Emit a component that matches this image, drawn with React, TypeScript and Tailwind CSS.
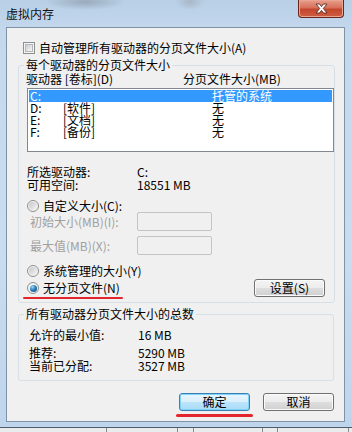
import React from 'react';

// 虚拟内存 dialog (Win7 look)

function CheckBox() {
    return (
        <span className="flex h-[12px] w-[12px] shrink-0 items-center justify-center border border-[#8e8f8f] bg-[#f4f4f4]">
            <span className="h-[8px] w-[8px] border border-[#b4b8bd] bg-gradient-to-br from-[#c9ccd1] to-[#f7f7f7]" />
        </span>
    );
}

function Radio({ checked }: { checked?: boolean }) {
    return (
        <span className="flex h-[12px] w-[12px] shrink-0 items-center justify-center rounded-full border border-[#8e8f8f] bg-[#f3f3f3]">
            {checked ? (
                <span className="h-[7px] w-[7px] rounded-full bg-[radial-gradient(circle_at_35%_30%,#a6d8f7_0%,#2a7fc0_45%,#0c3f6e_100%)]" />
            ) : (
                <span className="h-[8px] w-[8px] rounded-full bg-gradient-to-br from-[#c4c6c9] to-[#f6f6f6]" />
            )}
        </span>
    );
}

function Button({ label, focused }: { label: string; focused?: boolean }) {
    return (
        <div
            className={
                focused
                    ? 'flex h-[18px] w-[71px] items-center justify-center rounded-[3px] border border-[#3c7fb1] bg-[linear-gradient(#e9f6fd_0%,#d8effc_50%,#bde5fc_50%,#a9dbf6_100%)] shadow-[inset_0_0_0_1px_#7fd3f8]'
                    : 'flex h-[18px] w-[71px] items-center justify-center rounded-[3px] border border-[#707070] bg-[linear-gradient(#f4f4f4_0%,#ececec_50%,#dedede_50%,#d0d0d0_100%)] shadow-[inset_0_0_0_1px_#fbfbfb]'
            }
        >
            {label}
        </div>
    );
}

function InputBox() {
    return <div className="h-[19px] w-[75px] rounded-[2px] border border-[#c2c4c6] bg-[#f0f0f0]" />;
}

export default function App() {
    const drives = [
        { d: 'C:', label: '', size: '托管的系统' },
        { d: 'D:', label: '[软件]', size: '无' },
        { d: 'E:', label: '[文档]', size: '无' },
        { d: 'F:', label: '[备份]', size: '无' },
    ];

    return (
        <div className="h-[432px] w-[352px] overflow-hidden bg-[#e9ecef] font-['Noto_Sans_CJK_SC',sans-serif] text-[12px] leading-[12px] text-black">
            <div className="flex h-[428px] flex-col border-b border-[#4f5d6b] bg-[linear-gradient(180deg,#b8cfe6_0%,#c5d9ee_8%,#c9dcf0_60%,#bfd5eb_100%)]">
                {/* title bar */}
                <div className="flex h-[27px] shrink-0 items-start bg-[radial-gradient(ellipse_40px_8px_at_85px_2px,#9aaabb,transparent),radial-gradient(ellipse_14px_8px_at_190px_2px,#a9b7c6,transparent)]">
                    <span className="ml-[6px] mt-[7px] leading-[13px] text-[#111]">虚拟内存</span>
                    <div className="ml-auto mr-[8px] flex h-[18px] w-[46px] items-center justify-center rounded-b-[4px] border border-t-0 border-[#6b241a] bg-[linear-gradient(#e8a08e_0%,#d7705a_45%,#c4462d_55%,#cf5d42_100%)] shadow-[inset_0_0_0_1px_#e9a594]">
                        <svg width="13" height="11" viewBox="0 0 13 11">
                            <path
                                d="M1 1 H4.5 L6.5 3.6 L8.5 1 H12 L8.3 5.5 L12 10 H8.5 L6.5 7.4 L4.5 10 H1 L4.7 5.5 Z"
                                fill="#ffffff"
                                stroke="#5a2a22"
                                strokeWidth="0.9"
                            />
                        </svg>
                    </div>
                </div>

                {/* client area */}
                <div className="ml-[6px] flex h-[395px] w-[339px] shrink-0 flex-col border border-[#7f93a8] bg-[#f0f0f0]">
                    <div className="ml-[16px] mt-[14px] flex h-[12px] items-center gap-[4px]">
                        <CheckBox />
                        <span>自动管理所有驱动器的分页文件大小(A)</span>
                    </div>

                    {/* 每个驱动器 */}
                    <fieldset className="ml-[11px] mt-[4px] w-[316px] rounded-[3px] border border-[#d5dfe5] pb-[3px]">
                        <legend className="ml-[5px] px-[2px] leading-[14px]">每个驱动器的分页文件大小</legend>
                        <div className="mt-[1px] flex h-[12px] pl-[7px]">
                            <span className="w-[157px]">驱动器 [卷标](D)</span>
                            <span>分页文件大小(MB)</span>
                        </div>
                        <div className="ml-[8px] mt-[3px] h-[64px] w-[307px] border border-[#828790] bg-white p-[1px]">
                            {drives.map((r, i) => (
                                <div
                                    key={r.d}
                                    className={i === 0 ? 'flex h-[12px] bg-[#3399ff] pl-[1px] text-white' : 'flex h-[12px] pl-[1px]'}
                                >
                                    <span className="w-[33px]">{r.d}</span>
                                    <span className="w-[149px]">{r.label}</span>
                                    <span>{r.size}</span>
                                </div>
                            ))}
                        </div>

                        <div className="ml-[8px] mt-[14px] flex flex-col gap-[1px]">
                            <div className="flex h-[12px]">
                                <span className="w-[110px]">所选驱动器:</span>
                                <span>C:</span>
                            </div>
                            <div className="flex h-[12px]">
                                <span className="w-[110px]">可用空间:</span>
                                <span>18551 MB</span>
                            </div>
                        </div>

                        <div className="ml-[8px] mt-[8px] flex h-[13px] items-center gap-[4px]">
                            <Radio />
                            <span>自定义大小(C):</span>
                        </div>
                        <div className="ml-[11px] flex h-[19px] items-center text-[#a0a0a0]">
                            <span className="w-[107px]">初始大小(MB)(I):</span>
                            <InputBox />
                        </div>
                        <div className="ml-[11px] mt-[5px] flex h-[19px] items-center text-[#a0a0a0]">
                            <span className="w-[107px]">最大值(MB)(X):</span>
                            <InputBox />
                        </div>

                        <div className="ml-[8px] mt-[9px] flex h-[13px] items-center gap-[4px]">
                            <Radio />
                            <span>系统管理的大小(Y)</span>
                        </div>
                        <div className="ml-[8px] mt-[2px] flex h-[18px] items-center">
                            <Radio checked />
                            <span className="ml-[4px]">无分页文件(N)</span>
                            <div className="ml-auto mr-[9px]">
                                <Button label="设置(S)" />
                            </div>
                        </div>
                        <div className="ml-[4px] h-[2px] w-[100px] rounded-full bg-[#e3262e]" />
                    </fieldset>

                    {/* 总数 */}
                    <fieldset className="ml-[11px] mt-[4px] w-[316px] rounded-[3px] border border-[#d5dfe5] pb-[8px]">
                        <legend className="ml-[5px] px-[2px] leading-[14px]">所有驱动器分页文件大小的总数</legend>
                        <div className="ml-[10px] mt-[8px] flex h-[12px]">
                            <span className="w-[109px]">允许的最小值:</span>
                            <span>16 MB</span>
                        </div>
                        <div className="ml-[10px] mt-[6px] flex h-[12px]">
                            <span className="w-[109px]">推荐:</span>
                            <span>5290 MB</span>
                        </div>
                        <div className="ml-[10px] mt-[1px] flex h-[12px]">
                            <span className="w-[109px]">当前已分配:</span>
                            <span>3527 MB</span>
                        </div>
                    </fieldset>

                    <div className="mt-[12px] flex justify-end gap-[10px] pr-[10px]">
                        <div className="flex flex-col items-center">
                            <Button label="确定" focused />
                            <div className="mt-[3px] h-[3px] w-[77px] rounded-full bg-[#e3262e]" />
                        </div>
                        <Button label="取消" />
                    </div>
                </div>
            </div>

            {/* window behind */}
            <div className="flex h-[4px] items-start text-[#444]">
                <div className="ml-[106px] h-[4px] w-[72px] border-x border-[#8a8a8a]" />
                <div className="ml-[15px] h-[4px] w-[70px] border-x border-[#8a8a8a]" />
                <div className="ml-[14px] h-[4px] w-[72px] border-x border-[#8a8a8a]" />
            </div>
        </div>
    );
}
